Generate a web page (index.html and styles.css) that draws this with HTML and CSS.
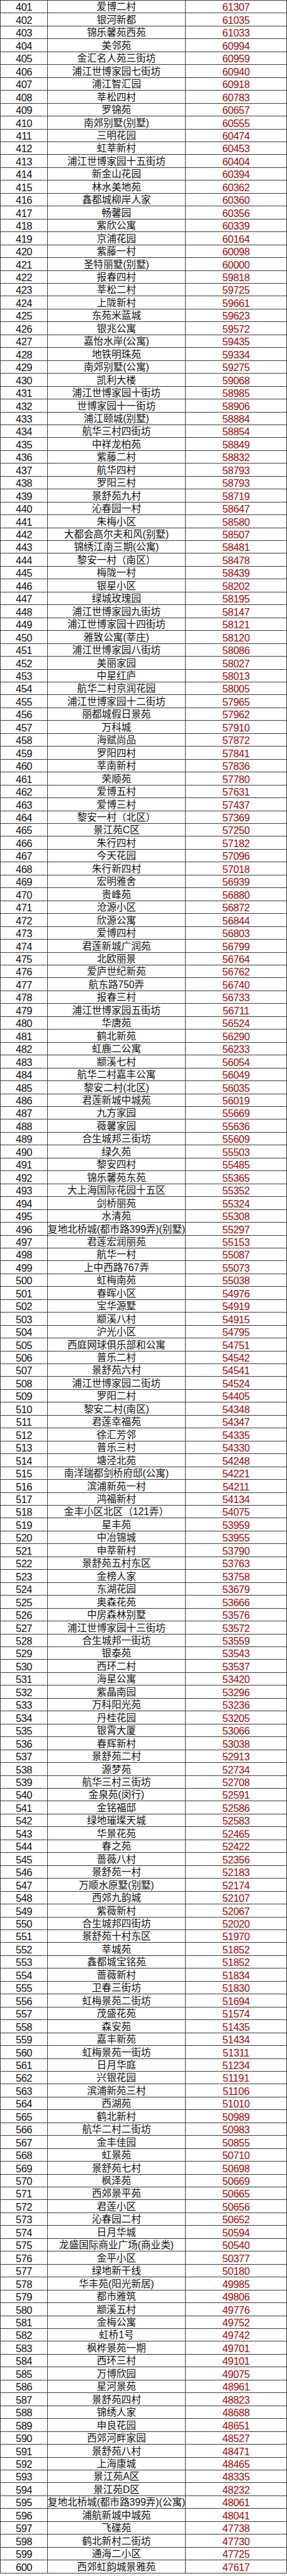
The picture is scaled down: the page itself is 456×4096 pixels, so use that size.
FILE: index.html
```html
<!DOCTYPE html>
<html lang="zh-CN">
<head>
<meta charset="utf-8">
<title>排行</title>
<link rel="stylesheet" href="styles.css">
</head>
<body>
<div class="table">
<div class="row"><div class="c num">401</div><div class="c name"><span>爱博二村</span></div><div class="c val">61307</div></div>
<div class="row"><div class="c num">402</div><div class="c name"><span>银河新都</span></div><div class="c val">61035</div></div>
<div class="row"><div class="c num">403</div><div class="c name"><span>锦乐馨苑西苑</span></div><div class="c val">61033</div></div>
<div class="row"><div class="c num">404</div><div class="c name"><span>美邻苑</span></div><div class="c val">60994</div></div>
<div class="row"><div class="c num">405</div><div class="c name"><span>金汇名人苑三街坊</span></div><div class="c val">60959</div></div>
<div class="row"><div class="c num">406</div><div class="c name"><span>浦江世博家园七街坊</span></div><div class="c val">60940</div></div>
<div class="row"><div class="c num">407</div><div class="c name"><span>浦江智汇园</span></div><div class="c val">60918</div></div>
<div class="row"><div class="c num">408</div><div class="c name"><span>莘松四村</span></div><div class="c val">60783</div></div>
<div class="row"><div class="c num">409</div><div class="c name"><span>罗锦苑</span></div><div class="c val">60657</div></div>
<div class="row"><div class="c num">410</div><div class="c name"><span>南郊别墅(别墅)</span></div><div class="c val">60555</div></div>
<div class="row"><div class="c num">411</div><div class="c name"><span>三明花园</span></div><div class="c val">60474</div></div>
<div class="row"><div class="c num">412</div><div class="c name"><span>虹莘新村</span></div><div class="c val">60453</div></div>
<div class="row"><div class="c num">413</div><div class="c name"><span>浦江世博家园十五街坊</span></div><div class="c val">60404</div></div>
<div class="row"><div class="c num">414</div><div class="c name"><span>新金山花园</span></div><div class="c val">60394</div></div>
<div class="row"><div class="c num">415</div><div class="c name"><span>林水美地苑</span></div><div class="c val">60362</div></div>
<div class="row"><div class="c num">416</div><div class="c name"><span>鑫都城柳岸人家</span></div><div class="c val">60360</div></div>
<div class="row"><div class="c num">417</div><div class="c name"><span>畅馨园</span></div><div class="c val">60356</div></div>
<div class="row"><div class="c num">418</div><div class="c name"><span>紫欣公寓</span></div><div class="c val">60339</div></div>
<div class="row"><div class="c num">419</div><div class="c name"><span>京浦花园</span></div><div class="c val">60164</div></div>
<div class="row"><div class="c num">420</div><div class="c name"><span>紫藤一村</span></div><div class="c val">60098</div></div>
<div class="row"><div class="c num">421</div><div class="c name"><span>圣特丽墅(别墅)</span></div><div class="c val">60000</div></div>
<div class="row"><div class="c num">422</div><div class="c name"><span>报春四村</span></div><div class="c val">59818</div></div>
<div class="row"><div class="c num">423</div><div class="c name"><span>莘松二村</span></div><div class="c val">59725</div></div>
<div class="row"><div class="c num">424</div><div class="c name"><span>上陇新村</span></div><div class="c val">59661</div></div>
<div class="row"><div class="c num">425</div><div class="c name"><span>东苑米蓝城</span></div><div class="c val">59623</div></div>
<div class="row"><div class="c num">426</div><div class="c name"><span>银兆公寓</span></div><div class="c val">59572</div></div>
<div class="row"><div class="c num">427</div><div class="c name"><span>嘉怡水岸(公寓)</span></div><div class="c val">59435</div></div>
<div class="row"><div class="c num">428</div><div class="c name"><span>地铁明珠苑</span></div><div class="c val">59334</div></div>
<div class="row"><div class="c num">429</div><div class="c name"><span>南郊别墅(公寓)</span></div><div class="c val">59275</div></div>
<div class="row"><div class="c num">430</div><div class="c name"><span>凯利大楼</span></div><div class="c val">59068</div></div>
<div class="row"><div class="c num">431</div><div class="c name"><span>浦江世博家园十街坊</span></div><div class="c val">58985</div></div>
<div class="row"><div class="c num">432</div><div class="c name"><span>世博家园十一街坊</span></div><div class="c val">58906</div></div>
<div class="row"><div class="c num">433</div><div class="c name"><span>浦江颐城(别墅)</span></div><div class="c val">58884</div></div>
<div class="row"><div class="c num">434</div><div class="c name"><span>航华三村四街坊</span></div><div class="c val">58854</div></div>
<div class="row"><div class="c num">435</div><div class="c name"><span>中祥龙柏苑</span></div><div class="c val">58849</div></div>
<div class="row"><div class="c num">436</div><div class="c name"><span>紫藤二村</span></div><div class="c val">58832</div></div>
<div class="row"><div class="c num">437</div><div class="c name"><span>航华四村</span></div><div class="c val">58793</div></div>
<div class="row"><div class="c num">438</div><div class="c name"><span>罗阳三村</span></div><div class="c val">58793</div></div>
<div class="row"><div class="c num">439</div><div class="c name"><span>景舒苑九村</span></div><div class="c val">58719</div></div>
<div class="row"><div class="c num">440</div><div class="c name"><span>沁春园一村</span></div><div class="c val">58647</div></div>
<div class="row"><div class="c num">441</div><div class="c name"><span>朱梅小区</span></div><div class="c val">58580</div></div>
<div class="row"><div class="c num">442</div><div class="c name"><span>大都会高尔夫和风(别墅)</span></div><div class="c val">58507</div></div>
<div class="row"><div class="c num">443</div><div class="c name"><span>锦绣江南三期(公寓)</span></div><div class="c val">58481</div></div>
<div class="row"><div class="c num">444</div><div class="c name"><span>黎安一村（南区）</span></div><div class="c val">58478</div></div>
<div class="row"><div class="c num">445</div><div class="c name"><span>梅陇一村</span></div><div class="c val">58439</div></div>
<div class="row"><div class="c num">446</div><div class="c name"><span>银星小区</span></div><div class="c val">58202</div></div>
<div class="row"><div class="c num">447</div><div class="c name"><span>绿城玫瑰园</span></div><div class="c val">58195</div></div>
<div class="row"><div class="c num">448</div><div class="c name"><span>浦江世博家园九街坊</span></div><div class="c val">58147</div></div>
<div class="row"><div class="c num">449</div><div class="c name"><span>浦江世博家园十四街坊</span></div><div class="c val">58121</div></div>
<div class="row"><div class="c num">450</div><div class="c name"><span>雅致公寓(莘庄)</span></div><div class="c val">58120</div></div>
<div class="row"><div class="c num">451</div><div class="c name"><span>浦江世博家园八街坊</span></div><div class="c val">58086</div></div>
<div class="row"><div class="c num">452</div><div class="c name"><span>美丽家园</span></div><div class="c val">58027</div></div>
<div class="row"><div class="c num">453</div><div class="c name"><span>中星红庐</span></div><div class="c val">58013</div></div>
<div class="row"><div class="c num">454</div><div class="c name"><span>航华二村京润花园</span></div><div class="c val">58005</div></div>
<div class="row"><div class="c num">455</div><div class="c name"><span>浦江世博家园十二街坊</span></div><div class="c val">57965</div></div>
<div class="row"><div class="c num">456</div><div class="c name"><span>丽都城假日景苑</span></div><div class="c val">57962</div></div>
<div class="row"><div class="c num">457</div><div class="c name"><span>万科城</span></div><div class="c val">57910</div></div>
<div class="row"><div class="c num">458</div><div class="c name"><span>海赋尚品</span></div><div class="c val">57872</div></div>
<div class="row"><div class="c num">459</div><div class="c name"><span>罗阳四村</span></div><div class="c val">57841</div></div>
<div class="row"><div class="c num">460</div><div class="c name"><span>莘南新村</span></div><div class="c val">57836</div></div>
<div class="row"><div class="c num">461</div><div class="c name"><span>荣顺苑</span></div><div class="c val">57780</div></div>
<div class="row"><div class="c num">462</div><div class="c name"><span>爱博五村</span></div><div class="c val">57631</div></div>
<div class="row"><div class="c num">463</div><div class="c name"><span>爱博三村</span></div><div class="c val">57437</div></div>
<div class="row"><div class="c num">464</div><div class="c name"><span>黎安一村（北区）</span></div><div class="c val">57369</div></div>
<div class="row"><div class="c num">465</div><div class="c name"><span>景江苑C区</span></div><div class="c val">57250</div></div>
<div class="row"><div class="c num">466</div><div class="c name"><span>朱行四村</span></div><div class="c val">57182</div></div>
<div class="row"><div class="c num">467</div><div class="c name"><span>今天花园</span></div><div class="c val">57096</div></div>
<div class="row"><div class="c num">468</div><div class="c name"><span>朱行新四村</span></div><div class="c val">57018</div></div>
<div class="row"><div class="c num">469</div><div class="c name"><span>宏明雅舍</span></div><div class="c val">56939</div></div>
<div class="row"><div class="c num">470</div><div class="c name"><span>贵峰苑</span></div><div class="c val">56880</div></div>
<div class="row"><div class="c num">471</div><div class="c name"><span>沧源小区</span></div><div class="c val">56872</div></div>
<div class="row"><div class="c num">472</div><div class="c name"><span>欣源公寓</span></div><div class="c val">56844</div></div>
<div class="row"><div class="c num">473</div><div class="c name"><span>爱博四村</span></div><div class="c val">56803</div></div>
<div class="row"><div class="c num">474</div><div class="c name"><span>君莲新城广润苑</span></div><div class="c val">56799</div></div>
<div class="row"><div class="c num">475</div><div class="c name"><span>北欧丽景</span></div><div class="c val">56764</div></div>
<div class="row"><div class="c num">476</div><div class="c name"><span>爱庐世纪新苑</span></div><div class="c val">56762</div></div>
<div class="row"><div class="c num">477</div><div class="c name"><span>航东路750弄</span></div><div class="c val">56740</div></div>
<div class="row"><div class="c num">478</div><div class="c name"><span>报春三村</span></div><div class="c val">56733</div></div>
<div class="row"><div class="c num">479</div><div class="c name"><span>浦江世博家园五街坊</span></div><div class="c val">56711</div></div>
<div class="row"><div class="c num">480</div><div class="c name"><span>华唐苑</span></div><div class="c val">56524</div></div>
<div class="row"><div class="c num">481</div><div class="c name"><span>鹤北新苑</span></div><div class="c val">56290</div></div>
<div class="row"><div class="c num">482</div><div class="c name"><span>虹鹿二公寓</span></div><div class="c val">56233</div></div>
<div class="row"><div class="c num">483</div><div class="c name"><span>颛溪七村</span></div><div class="c val">56054</div></div>
<div class="row"><div class="c num">484</div><div class="c name"><span>航华二村嘉丰公寓</span></div><div class="c val">56049</div></div>
<div class="row"><div class="c num">485</div><div class="c name"><span>黎安二村(北区)</span></div><div class="c val">56035</div></div>
<div class="row"><div class="c num">486</div><div class="c name"><span>君莲新城中城苑</span></div><div class="c val">56019</div></div>
<div class="row"><div class="c num">487</div><div class="c name"><span>九方家园</span></div><div class="c val">55669</div></div>
<div class="row"><div class="c num">488</div><div class="c name"><span>薇馨家园</span></div><div class="c val">55636</div></div>
<div class="row"><div class="c num">489</div><div class="c name"><span>合生城邦三街坊</span></div><div class="c val">55609</div></div>
<div class="row"><div class="c num">490</div><div class="c name"><span>绿久苑</span></div><div class="c val">55503</div></div>
<div class="row"><div class="c num">491</div><div class="c name"><span>黎安四村</span></div><div class="c val">55485</div></div>
<div class="row"><div class="c num">492</div><div class="c name"><span>锦乐馨苑东苑</span></div><div class="c val">55365</div></div>
<div class="row"><div class="c num">493</div><div class="c name"><span>大上海国际花园十五区</span></div><div class="c val">55352</div></div>
<div class="row"><div class="c num">494</div><div class="c name"><span>剑桥丽苑</span></div><div class="c val">55324</div></div>
<div class="row"><div class="c num">495</div><div class="c name"><span>水清苑</span></div><div class="c val">55308</div></div>
<div class="row"><div class="c num">496</div><div class="c name"><span>复地北桥城(都市路399弄)(别墅)</span></div><div class="c val">55297</div></div>
<div class="row"><div class="c num">497</div><div class="c name"><span>君莲宏润丽苑</span></div><div class="c val">55153</div></div>
<div class="row"><div class="c num">498</div><div class="c name"><span>航华一村</span></div><div class="c val">55087</div></div>
<div class="row"><div class="c num">499</div><div class="c name"><span>上中西路767弄</span></div><div class="c val">55073</div></div>
<div class="row"><div class="c num">500</div><div class="c name"><span>虹梅南苑</span></div><div class="c val">55038</div></div>
<div class="row"><div class="c num">501</div><div class="c name"><span>春晖小区</span></div><div class="c val">54976</div></div>
<div class="row"><div class="c num">502</div><div class="c name"><span>宝华源墅</span></div><div class="c val">54919</div></div>
<div class="row"><div class="c num">503</div><div class="c name"><span>颛溪八村</span></div><div class="c val">54915</div></div>
<div class="row"><div class="c num">504</div><div class="c name"><span>沪光小区</span></div><div class="c val">54795</div></div>
<div class="row"><div class="c num">505</div><div class="c name"><span>西庭网球俱乐部和公寓</span></div><div class="c val">54751</div></div>
<div class="row"><div class="c num">506</div><div class="c name"><span>普乐二村</span></div><div class="c val">54542</div></div>
<div class="row"><div class="c num">507</div><div class="c name"><span>景舒苑六村</span></div><div class="c val">54541</div></div>
<div class="row"><div class="c num">508</div><div class="c name"><span>浦江世博家园二街坊</span></div><div class="c val">54524</div></div>
<div class="row"><div class="c num">509</div><div class="c name"><span>罗阳二村</span></div><div class="c val">54405</div></div>
<div class="row"><div class="c num">510</div><div class="c name"><span>黎安二村(南区)</span></div><div class="c val">54348</div></div>
<div class="row"><div class="c num">511</div><div class="c name"><span>君莲幸福苑</span></div><div class="c val">54347</div></div>
<div class="row"><div class="c num">512</div><div class="c name"><span>徐汇芳邻</span></div><div class="c val">54335</div></div>
<div class="row"><div class="c num">513</div><div class="c name"><span>普乐三村</span></div><div class="c val">54330</div></div>
<div class="row"><div class="c num">514</div><div class="c name"><span>塘泾北苑</span></div><div class="c val">54248</div></div>
<div class="row"><div class="c num">515</div><div class="c name"><span>南洋瑞都剑桥府邸(公寓)</span></div><div class="c val">54221</div></div>
<div class="row"><div class="c num">516</div><div class="c name"><span>滨浦新苑一村</span></div><div class="c val">54211</div></div>
<div class="row"><div class="c num">517</div><div class="c name"><span>鸿福新村</span></div><div class="c val">54134</div></div>
<div class="row"><div class="c num">518</div><div class="c name"><span>金丰小区北区（121弄）</span></div><div class="c val">54075</div></div>
<div class="row"><div class="c num">519</div><div class="c name"><span>星丰苑</span></div><div class="c val">53959</div></div>
<div class="row"><div class="c num">520</div><div class="c name"><span>中冶锦城</span></div><div class="c val">53955</div></div>
<div class="row"><div class="c num">521</div><div class="c name"><span>申莘新村</span></div><div class="c val">53790</div></div>
<div class="row"><div class="c num">522</div><div class="c name"><span>景舒苑五村东区</span></div><div class="c val">53763</div></div>
<div class="row"><div class="c num">523</div><div class="c name"><span>金榜人家</span></div><div class="c val">53758</div></div>
<div class="row"><div class="c num">524</div><div class="c name"><span>东湖花园</span></div><div class="c val">53679</div></div>
<div class="row"><div class="c num">525</div><div class="c name"><span>奥森花苑</span></div><div class="c val">53666</div></div>
<div class="row"><div class="c num">526</div><div class="c name"><span>中房森林别墅</span></div><div class="c val">53576</div></div>
<div class="row"><div class="c num">527</div><div class="c name"><span>浦江世博家园十三街坊</span></div><div class="c val">53572</div></div>
<div class="row"><div class="c num">528</div><div class="c name"><span>合生城邦一街坊</span></div><div class="c val">53559</div></div>
<div class="row"><div class="c num">529</div><div class="c name"><span>银泰苑</span></div><div class="c val">53543</div></div>
<div class="row"><div class="c num">530</div><div class="c name"><span>西环二村</span></div><div class="c val">53537</div></div>
<div class="row"><div class="c num">531</div><div class="c name"><span>海星公寓</span></div><div class="c val">53420</div></div>
<div class="row"><div class="c num">532</div><div class="c name"><span>紫晶南园</span></div><div class="c val">53296</div></div>
<div class="row"><div class="c num">533</div><div class="c name"><span>万科阳光苑</span></div><div class="c val">53236</div></div>
<div class="row"><div class="c num">534</div><div class="c name"><span>丹桂花园</span></div><div class="c val">53205</div></div>
<div class="row"><div class="c num">535</div><div class="c name"><span>银霄大厦</span></div><div class="c val">53066</div></div>
<div class="row"><div class="c num">536</div><div class="c name"><span>春辉新村</span></div><div class="c val">53038</div></div>
<div class="row"><div class="c num">537</div><div class="c name"><span>景舒苑二村</span></div><div class="c val">52913</div></div>
<div class="row"><div class="c num">538</div><div class="c name"><span>源梦苑</span></div><div class="c val">52734</div></div>
<div class="row"><div class="c num">539</div><div class="c name"><span>航华三村三街坊</span></div><div class="c val">52708</div></div>
<div class="row"><div class="c num">540</div><div class="c name"><span>金泉苑(闵行)</span></div><div class="c val">52591</div></div>
<div class="row"><div class="c num">541</div><div class="c name"><span>金铭福邸</span></div><div class="c val">52586</div></div>
<div class="row"><div class="c num">542</div><div class="c name"><span>绿地璀璨天城</span></div><div class="c val">52583</div></div>
<div class="row"><div class="c num">543</div><div class="c name"><span>华景花苑</span></div><div class="c val">52465</div></div>
<div class="row"><div class="c num">544</div><div class="c name"><span>春之苑</span></div><div class="c val">52422</div></div>
<div class="row"><div class="c num">545</div><div class="c name"><span>蔷薇八村</span></div><div class="c val">52356</div></div>
<div class="row"><div class="c num">546</div><div class="c name"><span>景舒苑一村</span></div><div class="c val">52183</div></div>
<div class="row"><div class="c num">547</div><div class="c name"><span>万顺水原墅(别墅)</span></div><div class="c val">52174</div></div>
<div class="row"><div class="c num">548</div><div class="c name"><span>西郊九韵城</span></div><div class="c val">52107</div></div>
<div class="row"><div class="c num">549</div><div class="c name"><span>紫薇新村</span></div><div class="c val">52067</div></div>
<div class="row"><div class="c num">550</div><div class="c name"><span>合生城邦四街坊</span></div><div class="c val">52020</div></div>
<div class="row"><div class="c num">551</div><div class="c name"><span>景舒苑十村东区</span></div><div class="c val">51970</div></div>
<div class="row"><div class="c num">552</div><div class="c name"><span>莘城苑</span></div><div class="c val">51852</div></div>
<div class="row"><div class="c num">553</div><div class="c name"><span>鑫都城宝铭苑</span></div><div class="c val">51852</div></div>
<div class="row"><div class="c num">554</div><div class="c name"><span>蔷薇新村</span></div><div class="c val">51834</div></div>
<div class="row"><div class="c num">555</div><div class="c name"><span>卫春三街坊</span></div><div class="c val">51830</div></div>
<div class="row"><div class="c num">556</div><div class="c name"><span>虹梅景苑二街坊</span></div><div class="c val">51694</div></div>
<div class="row"><div class="c num">557</div><div class="c name"><span>茂盛花苑</span></div><div class="c val">51574</div></div>
<div class="row"><div class="c num">558</div><div class="c name"><span>森安苑</span></div><div class="c val">51435</div></div>
<div class="row"><div class="c num">559</div><div class="c name"><span>嘉丰新苑</span></div><div class="c val">51434</div></div>
<div class="row"><div class="c num">560</div><div class="c name"><span>虹梅景苑一街坊</span></div><div class="c val">51311</div></div>
<div class="row"><div class="c num">561</div><div class="c name"><span>日月华庭</span></div><div class="c val">51234</div></div>
<div class="row"><div class="c num">562</div><div class="c name"><span>兴银花园</span></div><div class="c val">51191</div></div>
<div class="row"><div class="c num">563</div><div class="c name"><span>滨浦新苑三村</span></div><div class="c val">51106</div></div>
<div class="row"><div class="c num">564</div><div class="c name"><span>西湖苑</span></div><div class="c val">51010</div></div>
<div class="row"><div class="c num">565</div><div class="c name"><span>鹤北新村</span></div><div class="c val">50989</div></div>
<div class="row"><div class="c num">566</div><div class="c name"><span>航华二村二街坊</span></div><div class="c val">50983</div></div>
<div class="row"><div class="c num">567</div><div class="c name"><span>金丰佳园</span></div><div class="c val">50855</div></div>
<div class="row"><div class="c num">568</div><div class="c name"><span>虹景苑</span></div><div class="c val">50710</div></div>
<div class="row"><div class="c num">569</div><div class="c name"><span>景舒苑七村</span></div><div class="c val">50698</div></div>
<div class="row"><div class="c num">570</div><div class="c name"><span>枫泽苑</span></div><div class="c val">50669</div></div>
<div class="row"><div class="c num">571</div><div class="c name"><span>西郊景平苑</span></div><div class="c val">50665</div></div>
<div class="row"><div class="c num">572</div><div class="c name"><span>君莲小区</span></div><div class="c val">50656</div></div>
<div class="row"><div class="c num">573</div><div class="c name"><span>沁春园二村</span></div><div class="c val">50652</div></div>
<div class="row"><div class="c num">574</div><div class="c name"><span>日月华城</span></div><div class="c val">50594</div></div>
<div class="row"><div class="c num">575</div><div class="c name"><span>龙盛国际商业广场(商业类)</span></div><div class="c val">50540</div></div>
<div class="row"><div class="c num">576</div><div class="c name"><span>金平小区</span></div><div class="c val">50377</div></div>
<div class="row"><div class="c num">577</div><div class="c name"><span>绿地新干线</span></div><div class="c val">50180</div></div>
<div class="row"><div class="c num">578</div><div class="c name"><span>华丰苑(阳光新居)</span></div><div class="c val">49985</div></div>
<div class="row"><div class="c num">579</div><div class="c name"><span>都市雅筑</span></div><div class="c val">49806</div></div>
<div class="row"><div class="c num">580</div><div class="c name"><span>颛溪五村</span></div><div class="c val">49776</div></div>
<div class="row"><div class="c num">581</div><div class="c name"><span>金梅公寓</span></div><div class="c val">49752</div></div>
<div class="row"><div class="c num">582</div><div class="c name"><span>虹桥1号</span></div><div class="c val">49742</div></div>
<div class="row"><div class="c num">583</div><div class="c name"><span>枫桦景苑一期</span></div><div class="c val">49701</div></div>
<div class="row"><div class="c num">584</div><div class="c name"><span>西环三村</span></div><div class="c val">49101</div></div>
<div class="row"><div class="c num">585</div><div class="c name"><span>万博欣园</span></div><div class="c val">49075</div></div>
<div class="row"><div class="c num">586</div><div class="c name"><span>星河景苑</span></div><div class="c val">48961</div></div>
<div class="row"><div class="c num">587</div><div class="c name"><span>景舒苑四村</span></div><div class="c val">48823</div></div>
<div class="row"><div class="c num">588</div><div class="c name"><span>锦绣人家</span></div><div class="c val">48688</div></div>
<div class="row"><div class="c num">589</div><div class="c name"><span>申良花园</span></div><div class="c val">48651</div></div>
<div class="row"><div class="c num">590</div><div class="c name"><span>西郊河畔家园</span></div><div class="c val">48527</div></div>
<div class="row"><div class="c num">591</div><div class="c name"><span>景舒苑八村</span></div><div class="c val">48471</div></div>
<div class="row"><div class="c num">592</div><div class="c name"><span>上海康城</span></div><div class="c val">48465</div></div>
<div class="row"><div class="c num">593</div><div class="c name"><span>景江苑A区</span></div><div class="c val">48335</div></div>
<div class="row"><div class="c num">594</div><div class="c name"><span>景江苑D区</span></div><div class="c val">48232</div></div>
<div class="row"><div class="c num">595</div><div class="c name"><span>复地北桥城(都市路399弄)(公寓)</span></div><div class="c val">48061</div></div>
<div class="row"><div class="c num">596</div><div class="c name"><span>浦航新城中城苑</span></div><div class="c val">48041</div></div>
<div class="row"><div class="c num">597</div><div class="c name"><span>飞碟苑</span></div><div class="c val">47738</div></div>
<div class="row"><div class="c num">598</div><div class="c name"><span>鹤北新村二街坊</span></div><div class="c val">47730</div></div>
<div class="row"><div class="c num">599</div><div class="c name"><span>通海二小区</span></div><div class="c val">47725</div></div>
<div class="row"><div class="c num">600</div><div class="c name"><span>西郊虹韵城景雅苑</span></div><div class="c val">47617</div></div>
</div>
</body>
</html>
```

FILE: styles.css
```css
* {
  box-sizing: border-box;
}

html, body {
  margin: 0;
  padding: 0;
  background: #ffffff;
}

.table {
  width: 456px;
  border-top: 1px solid #3a3a3a;
  border-left: 1px solid #3a3a3a;
  font-family: "Liberation Sans", "Noto Sans CJK SC", sans-serif;
}

.row {
  display: grid;
  grid-template-columns: 75px 219px 1fr;
  height: 20.46px;
  border-bottom: 1px solid #3a3a3a;
}

.c {
  display: flex;
  justify-content: center;
  align-items: flex-end;
  border-right: 1px solid #3a3a3a;
  overflow: hidden;
  white-space: nowrap;
  line-height: 18px;
  padding-bottom: 0;
}

.num {
  font-size: 16.4px;
  color: #111111;
  letter-spacing: -0.4px;
}

.name {
  font-size: 15.6px;
  color: #111111;
}

.name span {
  flex: none;
}

.val {
  font-size: 16.4px;
  color: #a00d0d;
  letter-spacing: -0.4px;
}
```
